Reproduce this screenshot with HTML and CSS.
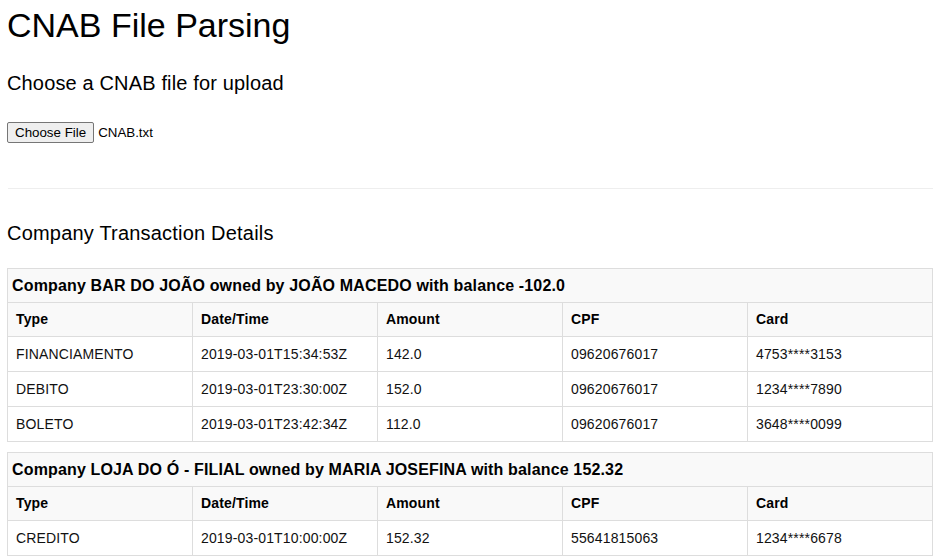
FILE: index.html
```html
<!DOCTYPE html>
<html lang="en">
<head>
<meta charset="utf-8">
<title>CNAB File Parsing</title>
<link rel="stylesheet" href="styles.css">
</head>
<body>
<div class="page">
  <h1 class="title">CNAB File Parsing</h1>
  <h2 class="subtitle">Choose a CNAB file for upload</h2>
  <div class="upload">
    <button class="file-btn" type="button">Choose File</button><span class="file-name">CNAB.txt</span>
  </div>
  <hr class="divider">
  <h3 class="section-title">Company Transaction Details</h3>

  <table class="tx-table">
    <thead>
      <tr><th class="company" colspan="5">Company BAR DO JOÃO owned by JOÃO MACEDO with balance -102.0</th></tr>
      <tr class="head-row"><th>Type</th><th>Date/Time</th><th>Amount</th><th>CPF</th><th>Card</th></tr>
    </thead>
    <tbody>
      <tr><td>FINANCIAMENTO</td><td>2019-03-01T15:34:53Z</td><td>142.0</td><td>09620676017</td><td>4753****3153</td></tr>
      <tr><td>DEBITO</td><td>2019-03-01T23:30:00Z</td><td>152.0</td><td>09620676017</td><td>1234****7890</td></tr>
      <tr><td>BOLETO</td><td>2019-03-01T23:42:34Z</td><td>112.0</td><td>09620676017</td><td>3648****0099</td></tr>
    </tbody>
  </table>

  <table class="tx-table">
    <thead>
      <tr><th class="company" colspan="5">Company LOJA DO Ó - FILIAL owned by MARIA JOSEFINA with balance 152.32</th></tr>
      <tr class="head-row"><th>Type</th><th>Date/Time</th><th>Amount</th><th>CPF</th><th>Card</th></tr>
    </thead>
    <tbody>
      <tr><td>CREDITO</td><td>2019-03-01T10:00:00Z</td><td>152.32</td><td>55641815063</td><td>1234****6678</td></tr>
    </tbody>
  </table>
</div>
</body>
</html>
```

FILE: styles.css
```css
html, body {
  margin: 0;
  padding: 0;
  background: #fff;
}

body {
  font-family: "Liberation Sans", Arial, sans-serif;
  color: #000;
  letter-spacing: 0.15px;
}

.page {
  padding: 0 1px 0 7px;
}

.title {
  margin: 5px 0 0;
  font-size: 34px;
  line-height: 40px;
  font-weight: 400;
  letter-spacing: 0;
}

.subtitle {
  margin: 26px 0 0;
  font-size: 20px;
  line-height: 24px;
  font-weight: 400;
}

.upload {
  margin-top: 27px;
  display: flex;
  align-items: center;
  height: 21px;
}

.file-btn {
  box-sizing: border-box;
  height: 21px;
  margin: 0 4px 0 0;
  padding: 0 7px;
  border: 1px solid #767676;
  border-radius: 2px;
  background: #efefef;
  color: #000;
  font-family: "Liberation Sans", Arial, sans-serif;
  font-size: 13.333px;
  line-height: 19px;
  letter-spacing: 0;
}

.file-name {
  font-size: 13.333px;
  line-height: 19px;
  color: #000;
  letter-spacing: 0;
}

.divider {
  margin: 45px 0 0 1px;
  border: 0;
  border-top: 1px solid #eee;
  height: 0;
}

.section-title {
  margin: 32px 0 0;
  font-size: 20px;
  line-height: 24px;
  font-weight: 400;
  letter-spacing: 0.2px;
}

.tx-table {
  width: 926px;
  table-layout: fixed;
  border-collapse: separate;
  border-spacing: 0;
  border-top: 1px solid #ddd;
  border-left: 1px solid #ddd;
  margin: 0 0 10px;
  font-size: 14px;
  color: #111;
}

.section-title + .tx-table {
  margin-top: 23px;
}

.tx-table th,
.tx-table td {
  border-right: 1px solid #ddd;
  border-bottom: 1px solid #ddd;
  text-align: left;
  vertical-align: top;
  overflow: hidden;
  white-space: nowrap;
}

.tx-table th.company {
  padding: 8px 4px;
  font-size: 16px;
  line-height: 17px;
  font-weight: 700;
  background: #f9f9f9;
  color: #000;
}

.head-row th {
  padding: 8px;
  line-height: 17px;
  font-weight: 700;
  background: #f9f9f9;
  color: #000;
}

.tx-table td {
  padding: 8px;
  line-height: 18px;
}
```
